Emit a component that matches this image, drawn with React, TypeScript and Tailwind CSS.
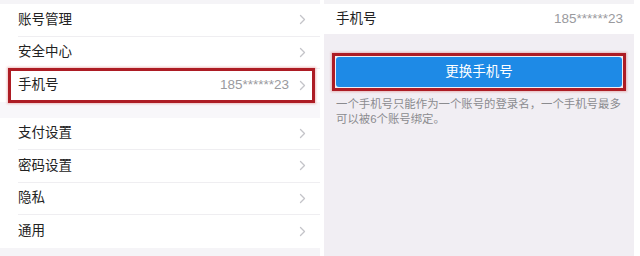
import React from 'react';

const font = { fontFamily: '"Liberation Sans", "Noto Sans CJK SC", sans-serif' };

function Chevron() {
  return (
    <svg width="7" height="11" viewBox="0 0 7 11" className="shrink-0">
      <path d="M1.5 1.5 L5.5 5.5 L1.5 9.5" fill="none" stroke="#c4c4c9" strokeWidth="1.3" strokeLinecap="round" strokeLinejoin="round" />
    </svg>
  );
}

interface RowProps {
  label: string;
  value?: string;
  last?: boolean;
  marked?: boolean;
}

function Row({ label, value, last, marked }: RowProps) {
  return (
    <div className="relative h-[32.5px] bg-white pl-[18px]">
      <div className={`flex h-full items-center pr-[14px] ${last ? '' : 'border-b border-[#efeef1]'}`}>
        <span className="flex-1 text-[13.5px] text-[#222]">{label}</span>
        {value && <span className="mr-[10px] text-[13.5px] text-[#9a9a9e]">{value}</span>}
        <Chevron />
      </div>
      {marked && (
        <div className="absolute -top-[1px] -bottom-[1px] left-[8px] right-[5px] border-[3px] border-[#ad1c24] shadow-[0_0_2px_1px_rgba(220,120,120,0.45)]" />
      )}
    </div>
  );
}

export default function App() {
  return (
    <div className="flex h-[256px] w-[640px] overflow-hidden bg-white" style={font}>
      {/* Left: settings list */}
      <div className="flex w-[320px] flex-col bg-[#f5f4f7]">
        <div className="h-[4px]" />
        <Row label="账号管理" />
        <Row label="安全中心" />
        <Row label="手机号" value="185******23" last marked />
        <div className="h-[16px] bg-[#f8f7fa]" />
        <Row label="支付设置" />
        <Row label="密码设置" />
        <Row label="隐私" />
        <Row label="通用" last />
      </div>

      {/* Right: phone detail */}
      <div className="ml-[4px] flex w-[310px] flex-col bg-[#f1eef3]">
        <div className="h-[4px] bg-[#f3f2f5]" />
        <div className="flex h-[30px] items-center bg-white pl-[12px] pr-[11px]">
          <span className="flex-1 text-[13.5px] text-[#222]">手机号</span>
          <span className="text-[13.5px] text-[#9a9a9e]">185******23</span>
        </div>
        <div className="mx-[8px] mt-[19px] border-[3px] border-[#ad1c24] p-[1px] shadow-[0_0_2px_1px_rgba(220,120,120,0.45)]">
          <div className="flex h-[30px] items-center justify-center rounded-[3px] bg-[#1e8ae6] text-[13.5px] text-white">
            更换手机号
          </div>
        </div>
        <p className="mt-[6px] pl-[12px] pr-[4px] text-[11.4px] leading-[15px] text-[#8b8b8f]">
          一个手机号只能作为一个账号的登录名，一个手机号最多可以被6个账号绑定。
        </p>
      </div>
    </div>
  );
}
